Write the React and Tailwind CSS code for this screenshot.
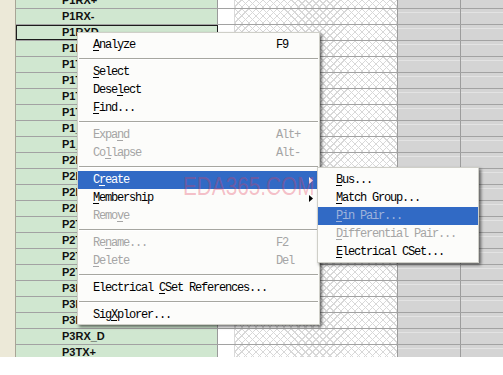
const NETS = [
  'P1RX+', 'P1RX-', 'P1RXD', 'P1RX_D', 'P1TX+', 'P1TX-', 'P1TXD', 'P1TX_D', 'P1_CLK', 'P1_EN',
  'P2RX+', 'P2RX-', 'P2RXD', 'P2RX_D', 'P2TX+', 'P2TX-', 'P2TXD', 'P2TX_D',
  'P3RX+', 'P3RX-', 'P3RXD', 'P3RX_D', 'P3TX+',
];

const MENU = [
  { label: 'Analyze', key: 0, shortcut: 'F9' },
  { sep: true },
  { label: 'Select', key: 0 },
  { label: 'Deselect', key: 4 },
  { label: 'Find...', key: 0 },
  { sep: true },
  { label: 'Expand', key: 4, shortcut: 'Alt+', disabled: true },
  { label: 'Collapse', key: 2, shortcut: 'Alt-', disabled: true },
  { sep: true },
  { label: 'Create', key: 1, arrow: true, active: true },
  { label: 'Membership', key: 0, arrow: true },
  { label: 'Remove', key: 4, disabled: true },
  { sep: true },
  { label: 'Rename...', key: 2, shortcut: 'F2', disabled: true },
  { label: 'Delete', key: 0, shortcut: 'Del', disabled: true },
  { sep: true },
  { label: 'Electrical CSet References...', key: 11 },
  { sep: true },
  { label: 'SigXplorer...', key: 3 },
];

const SUBMENU = [
  { label: 'Bus...', key: 0 },
  { label: 'Match Group...', key: 0 },
  { label: 'Pin Pair...', key: 0, active: true, disabled: true },
  { label: 'Differential Pair...', key: 0, disabled: true },
  { label: 'Electrical CSet...', key: 0 },
];

function Label({ text, k }) {
  return (
    <span>
      {text.slice(0, k)}
      <u className="underline-offset-[2px]">{text[k]}</u>
      {text.slice(k + 1)}
    </span>
  );
}

function Arrow({ white }) {
  return (
    <svg width="4" height="7" viewBox="0 0 4 7" className="ml-auto mr-[6px]">
      <path d="M0 0 L4 3.5 L0 7 Z" fill={white ? '#ffffff' : '#000000'} />
    </svg>
  );
}

function Separator() {
  return (
    <div className="flex h-[9px] flex-col justify-center px-[1px]">
      <div className="h-px bg-[#a6a6a0]" />
      <div className="h-px bg-white" />
    </div>
  );
}

function MenuItem({ item, labelWidth, pad }) {
  let color = 'text-black';
  if (item.active && item.disabled) color = 'text-[#9fb3db]';
  else if (item.active) color = 'text-white';
  else if (item.disabled) color = 'text-[#a5a5a5]';
  return (
    <div className={`flex h-[18px] items-center whitespace-pre ${item.active ? 'bg-[#316ac5]' : ''} ${color}`}>
      <div className={labelWidth}>
        <div className={pad}>
          <Label text={item.label} k={item.key} />
        </div>
      </div>
      {item.shortcut && <span>{item.shortcut}</span>}
      {item.arrow && <Arrow white={item.active} />}
    </div>
  );
}

function Row({ name, selected }) {
  return (
    <div className="flex h-4 border-b border-[#a2a2a2]">
      <div
        className={
          selected
            ? 'flex w-[202px] items-center border-r border-[#9a9a9a] bg-[#d0e7d0] pl-[46px] outline outline-1 -outline-offset-1 outline-[#1c1c1c]'
            : 'flex w-[202px] items-center border-r border-[#9a9a9a] bg-[#d0e7d0] pl-[46px]'
        }
      >
        <span className="text-[11px] font-bold text-[#111]">{name}</span>
      </div>
      <div className="w-[17px] border-r border-[#dadada] bg-white" />
      <div className="w-[162px] bg-[image:repeating-linear-gradient(45deg,#d8d8d8_0px,#d8d8d8_1px,transparent_1px,transparent_5px),repeating-linear-gradient(-45deg,#d8d8d8_0px,#d8d8d8_1px,#ffffff_1px,#ffffff_5px)]" />
      <div className="w-[63px] border-l border-[#9c9c9c] bg-[#d4d4d4]">
        <div className="mt-[3px] h-px bg-[#e3e3e3]" />
      </div>
      <div className="flex-1 border-l border-[#9c9c9c] bg-[#d4d4d4]">
        <div className="mt-[3px] h-px bg-[#e3e3e3]" />
      </div>
    </div>
  );
}

export default function App() {
  return (
    <div className="relative h-[375px] w-[503px] overflow-hidden bg-white font-['Liberation_Sans',Arial,sans-serif]">
      <div className="flex h-[357px] overflow-hidden">
        <div className="w-[16px] border-r border-[#a8a596] bg-[#ece9d8]" />
        <div className="-mt-[7px] flex-1">
          {NETS.map((n, i) => (
            <Row key={n} name={n} selected={i === 2} />
          ))}
        </div>
      </div>

      <div className="absolute left-[77px] top-[32px] w-[243px] border border-[#cfcfc8] bg-[#fcfcfa] pt-[3px] font-['Liberation_Mono',monospace] text-[12px] tracking-[-1.2px] shadow-[2px_2px_3px_rgba(0,0,0,0.55)]">
        {MENU.map((item, i) =>
          item.sep ? (
            <Separator key={i} />
          ) : (
            <MenuItem key={i} item={item} labelWidth="w-[198px]" pad="pl-[15px]" />
          )
        )}
      </div>

      <div className="absolute left-[317px] top-[167px] w-[162px] border border-[#cfcfc8] bg-[#fcfcfa] pt-[3px] pb-px font-['Liberation_Mono',monospace] text-[12px] tracking-[-1.2px] shadow-[2px_2px_3px_rgba(0,0,0,0.55)]">
        {SUBMENU.map((item, i) => (
          <MenuItem key={i} item={item} labelWidth="w-full" pad="pl-[18px]" />
        ))}
      </div>

      <div className="pointer-events-none absolute left-[183px] top-[174px] origin-left scale-x-[0.83] whitespace-nowrap text-[25px] leading-none text-[rgba(228,60,90,0.33)]">
        EDA365.COM
      </div>
    </div>
  );
}
